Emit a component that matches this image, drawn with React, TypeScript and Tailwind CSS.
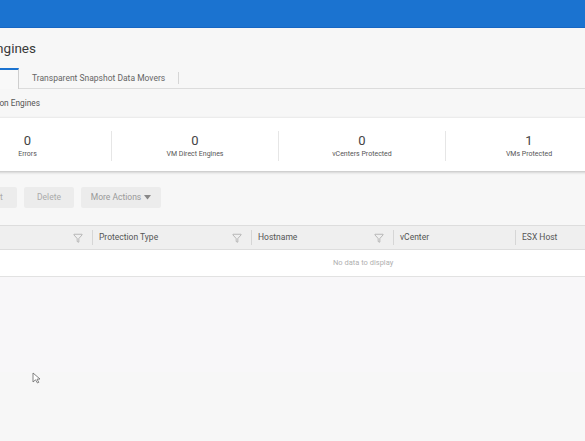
import { Filter } from "lucide-react";

const stats = [
  { value: "0", label: "Errors" },
  { value: "0", label: "VM Direct Engines" },
  { value: "0", label: "vCenters Protected" },
  { value: "1", label: "VMs Protected" },
];

const columns = [
  { title: "Name", width: "w-[192px]", filter: true },
  { title: "Protection Type", width: "w-[159px]", filter: true },
  { title: "Hostname", width: "w-[142px]", filter: true },
  { title: "vCenter", width: "w-[122px]", filter: false },
  { title: "ESX Host", width: "w-[120px]", filter: false },
];

export default function App() {
  return (
    <div
      className="relative w-full h-[441px] overflow-hidden bg-[#f7f7f7] text-[#333]"
      style={{ fontFamily: "Roboto, 'Liberation Sans', sans-serif" }}
    >
      {/* Top bar */}
      <div className="h-[28px] bg-[#1b73d0] border-b border-[#1767c4]" />

      {/* Page title (clipped at the left edge) */}
      <div className="h-[40px] flex items-center">
        <div className="w-[36px] flex justify-end whitespace-nowrap text-[13.5px] text-[#3a3a3a]">
          VM Direct Protection Engines
        </div>
      </div>

      {/* Tabs */}
      <div className="h-[21px] flex items-stretch">
        <div className="-ml-[140px] w-[159px] shrink-0 border-t-[2px] border-[#1b73d0] border-r border-r-[#cfcfcf] bg-[#f9f9f9] flex items-center justify-center text-[9px] text-[#333]">
          Protection Engines
        </div>
        <div className="flex-1 flex items-center border-b border-[#dcdcdc]">
          <div className="pl-[13px] pr-[13px] text-[8.5px] text-[#666] whitespace-nowrap">
            Transparent Snapshot Data Movers
          </div>
          <div className="h-[12px] border-l border-[#d6d6d6]" />
        </div>
      </div>

      {/* Sub title */}
      <div className="h-[29px] flex items-center">
        <div className="w-[40px] flex justify-end whitespace-nowrap text-[8.3px] text-[#555]">
          VM Direct Protection Engines
        </div>
      </div>

      {/* Summary card */}
      <div className="-ml-[56px] w-[720px] h-[53px] bg-white shadow-[0_1px_3px_rgba(0,0,0,0.25)] flex items-center pt-[3px]">
        {stats.map((s, i) => (
          <div
            key={s.label}
            className={`w-[167px] h-[30px] flex flex-col items-center justify-center ${
              i > 0 ? "border-l border-[#e6e6e6]" : ""
            }`}
          >
            <div className="text-[13px] leading-[14px] text-[#444]">{s.value}</div>
            <div className="mt-[2px] text-[7px] leading-[9px] text-[#555]">{s.label}</div>
          </div>
        ))}
      </div>

      {/* Action buttons */}
      <div className="mt-[16px] -ml-[26px] flex gap-[7px]">
        <button className="w-[43px] h-[21px] bg-[#ececec] text-[8.5px] text-[#aaa] rounded-[2px]">
          Edit
        </button>
        <button className="w-[50px] h-[21px] bg-[#ececec] text-[8.5px] text-[#aaa] rounded-[2px]">
          Delete
        </button>
        <button className="w-[80px] h-[21px] bg-[#ececec] text-[8.5px] text-[#999] rounded-[2px] flex items-center justify-center gap-[3px]">
          More Actions
          <svg width="7" height="5" viewBox="0 0 7 5">
            <path d="M0 0 H7 L3.5 4.5 Z" fill="#888" />
          </svg>
        </button>
      </div>

      {/* Table */}
      <div className="mt-[17px] -ml-[100px] w-[800px]">
        <div className="h-[25px] flex items-center bg-[#efefef] border-y border-[#dddddd]">
          {columns.map((c, i) => (
            <div
              key={c.title}
              className={`${c.width} h-[15px] shrink-0 flex items-center justify-between pl-[6px] pr-[9px] ${
                i > 0 ? "border-l border-[#d6d6d6]" : ""
              }`}
            >
              <span className="text-[8.5px] text-[#555] whitespace-nowrap">{c.title}</span>
              {c.filter && <Filter size={10} strokeWidth={1.3} color="#888" />}
            </div>
          ))}
        </div>
        <div className="h-[27px] bg-white border-b border-[#e2e2e2] flex items-center pl-[433px]">
          <span className="text-[7.5px] text-[#b0b0b0]">No data to display</span>
        </div>
      </div>

      <div className="h-[95px] bg-[#f8f7f9]" />

      {/* Mouse cursor */}
      <svg
        className="absolute left-[32px] top-[372px]"
        width="9"
        height="12"
        viewBox="0 0 9 12"
      >
        <path d="M1 1 L1 10 L3.5 7.8 L5.5 11 L6.8 10.3 L5 7.2 L8 7 Z" fill="#fff" stroke="#666" strokeWidth="0.8" />
      </svg>
    </div>
  );
}
